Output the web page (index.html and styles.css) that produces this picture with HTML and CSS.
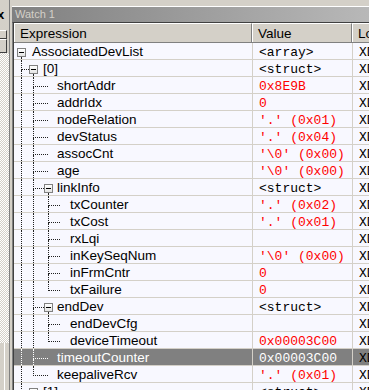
FILE: index.html
```html
<!DOCTYPE html>
<html>
<head>
<meta charset="utf-8">
<link rel="stylesheet" href="styles.css">
</head>
<body>
<div class="side">
  <div class="sb">
    <div class="close">x</div>
    <div class="btn1"></div>
    <div class="btn2"></div>
    <div class="track"></div>
    <div class="thumb"></div>
  </div>
</div>
<div class="watch">
  <div class="title">Watch 1</div>
  <div class="grid">
    <div class="hdr">
      <div class="h1">Expression</div>
      <div class="h2">Value</div>
      <div class="h3">Location</div>
    </div>

    <div class="row">
      <div class="ex"><span class="sp3"></span><span class="node"><span class="nt"></span><span class="bx"></span><span class="stem"></span></span><span class="lbl m6">AssociatedDevList</span></div>
      <div class="val">&lt;array&gt;</div><div class="loc">XDATA</div>
    </div>
    <div class="row">
      <div class="ex"><span class="sp7"></span><span class="tee w8"><span class="th"></span><span class="tb"></span></span><span class="node"><span class="nt"></span><span class="bx"></span><span class="stem"></span></span><span class="lbl m5">[0]</span></div>
      <div class="val">&lt;struct&gt;</div><div class="loc">XDATA</div>
    </div>
    <div class="row">
      <div class="ex"><span class="sp7"></span><span class="v w12"></span><span class="tee w15"><span class="th"></span><span class="tb"></span></span><span class="lbl m9">shortAddr</span></div>
      <div class="val red">0x8E9B</div><div class="loc">XDATA</div>
    </div>
    <div class="row">
      <div class="ex"><span class="sp7"></span><span class="v w12"></span><span class="tee w15"><span class="th"></span><span class="tb"></span></span><span class="lbl m9">addrIdx</span></div>
      <div class="val red">0</div><div class="loc">XDATA</div>
    </div>
    <div class="row">
      <div class="ex"><span class="sp7"></span><span class="v w12"></span><span class="tee w15"><span class="th"></span><span class="tb"></span></span><span class="lbl m9">nodeRelation</span></div>
      <div class="val red">'.' (0x01)</div><div class="loc">XDATA</div>
    </div>
    <div class="row">
      <div class="ex"><span class="sp7"></span><span class="v w12"></span><span class="tee w15"><span class="th"></span><span class="tb"></span></span><span class="lbl m9">devStatus</span></div>
      <div class="val red">'.' (0x04)</div><div class="loc">XDATA</div>
    </div>
    <div class="row">
      <div class="ex"><span class="sp7"></span><span class="v w12"></span><span class="tee w15"><span class="th"></span><span class="tb"></span></span><span class="lbl m9">assocCnt</span></div>
      <div class="val red">'\0' (0x00)</div><div class="loc">XDATA</div>
    </div>
    <div class="row">
      <div class="ex"><span class="sp7"></span><span class="v w12"></span><span class="tee w15"><span class="th"></span><span class="tb"></span></span><span class="lbl m9">age</span></div>
      <div class="val red">'\0' (0x00)</div><div class="loc">XDATA</div>
    </div>
    <div class="row">
      <div class="ex"><span class="sp7"></span><span class="v w12"></span><span class="tee w11"><span class="th"></span><span class="tb"></span></span><span class="node"><span class="nt"></span><span class="bx"></span><span class="stem"></span></span><span class="lbl m4">linkInfo</span></div>
      <div class="val">&lt;struct&gt;</div><div class="loc">XDATA</div>
    </div>
    <div class="row">
      <div class="ex"><span class="sp7"></span><span class="v w12"></span><span class="v w15"></span><span class="tee w12"><span class="th"></span><span class="tb"></span></span><span class="lbl m10">txCounter</span></div>
      <div class="val red">'.' (0x02)</div><div class="loc">XDATA</div>
    </div>
    <div class="row">
      <div class="ex"><span class="sp7"></span><span class="v w12"></span><span class="v w15"></span><span class="tee w12"><span class="th"></span><span class="tb"></span></span><span class="lbl m10">txCost</span></div>
      <div class="val red">'.' (0x01)</div><div class="loc">XDATA</div>
    </div>
    <div class="row">
      <div class="ex"><span class="sp7"></span><span class="v w12"></span><span class="v w15"></span><span class="tee w12"><span class="th"></span><span class="tb"></span></span><span class="lbl m10">rxLqi</span></div>
      <div class="val red"></div><div class="loc">XDATA</div>
    </div>
    <div class="row">
      <div class="ex"><span class="sp7"></span><span class="v w12"></span><span class="v w15"></span><span class="tee w12"><span class="th"></span><span class="tb"></span></span><span class="lbl m10">inKeySeqNum</span></div>
      <div class="val red">'\0' (0x00)</div><div class="loc">XDATA</div>
    </div>
    <div class="row">
      <div class="ex"><span class="sp7"></span><span class="v w12"></span><span class="v w15"></span><span class="tee w12"><span class="th"></span><span class="tb"></span></span><span class="lbl m10">inFrmCntr</span></div>
      <div class="val red">0</div><div class="loc">XDATA</div>
    </div>
    <div class="row">
      <div class="ex"><span class="sp7"></span><span class="v w12"></span><span class="v w15"></span><span class="tee end w12"><span class="th"></span><span class="tb"></span></span><span class="lbl m10">txFailure</span></div>
      <div class="val red">0</div><div class="loc">XDATA</div>
    </div>
    <div class="row">
      <div class="ex"><span class="sp7"></span><span class="v w12"></span><span class="tee w11"><span class="th"></span><span class="tb"></span></span><span class="node"><span class="nt"></span><span class="bx"></span><span class="stem"></span></span><span class="lbl m4">endDev</span></div>
      <div class="val">&lt;struct&gt;</div><div class="loc">XDATA</div>
    </div>
    <div class="row">
      <div class="ex"><span class="sp7"></span><span class="v w12"></span><span class="v w15"></span><span class="tee w12"><span class="th"></span><span class="tb"></span></span><span class="lbl m10">endDevCfg</span></div>
      <div class="val red"></div><div class="loc">XDATA</div>
    </div>
    <div class="row">
      <div class="ex"><span class="sp7"></span><span class="v w12"></span><span class="v w15"></span><span class="tee end w12"><span class="th"></span><span class="tb"></span></span><span class="lbl m10">deviceTimeout</span></div>
      <div class="val red">0x00003C00</div><div class="loc">XDATA</div>
    </div>
    <div class="row sel">
      <div class="ex"><span class="sp7"></span><span class="v w12"></span><span class="tee w15"><span class="th"></span><span class="tb"></span></span><span class="lbl m9">timeoutCounter</span></div>
      <div class="val">0x00003C00</div><div class="loc">XDATA</div>
    </div>
    <div class="row">
      <div class="ex"><span class="sp7"></span><span class="v w12"></span><span class="tee end w15"><span class="th"></span><span class="tb"></span></span><span class="lbl m9">keepaliveRcv</span></div>
      <div class="val red">'.' (0x01)</div><div class="loc">XDATA</div>
    </div>
    <div class="row">
      <div class="ex"><span class="sp7"></span><span class="tee w8"><span class="th"></span><span class="tb"></span></span><span class="node"><span class="nt"></span><span class="bx plus"></span></span><span class="lbl m5">[1]</span></div>
      <div class="val">&lt;struct&gt;</div><div class="loc">XDATA</div>
    </div>
  </div>
</div>
</body>
</html>
```
FILE: styles.css
```css
* { box-sizing: border-box; }
html, body { margin: 0; padding: 0; }
body {
  width: 369px;
  height: 390px;
  overflow: hidden;
  background: #d4d0c8;
  display: flex;
  font-family: "Liberation Sans", Arial, sans-serif;
}

/* left neighbour pane with scrollbar */
.side {
  width: 12px;
  flex: none;
  display: flex;
}
.sb {
  width: 10px;
  display: flex;
  flex-direction: column;
  border-right: 1px solid #808080;
  overflow: hidden;
}
.close {
  height: 30px;
  font-size: 13px;
  font-weight: bold;
  line-height: 13px;
  padding-top: 8px;
  margin-left: -3px;
  color: #000;
}
.btn1 {
  height: 9px;
  width: 7px;
  border-top: 1px solid #fff;
  border-right: 1px solid #404040;
  border-bottom: 1px solid #404040;
}
.btn2 {
  height: 14px;
  width: 7px;
  border-top: 1px solid #fff;
  border-right: 1px solid #404040;
  border-bottom: 1px solid #404040;
}
.track {
  flex: 1;
  background: repeating-conic-gradient(#ffffff 0 25%, #d4d0c8 0 50%) 0 0 / 2px 2px;
}
.thumb {
  height: 47px;
  background: linear-gradient(to right, #d4d0c8 4px, #fff 4px, #fff 5px, #d4d0c8 5px);
}

/* watch window */
.watch {
  flex: 1;
  display: flex;
  flex-direction: column;
  padding-top: 6px;
  min-width: 0;
}
.title {
  height: 16px;
  border-top: 1px solid #fff;
  background: linear-gradient(to right, #808080, #b8b8b8);
  color: #d4d0c8;
  font-size: 11px;
  line-height: 15px;
  padding-left: 3px;
  white-space: nowrap;
}
.grid {
  flex: 1;
  border-top: 1px solid #404040;
  border-left: 1px solid #808080;
  box-shadow: inset 1px 0 0 #404040;
  padding-left: 1px;
  background: #f8f8ff;
}

.hdr {
  display: grid;
  grid-template-columns: 238px 100px 1fr;
  height: 20px;
  background: #d4d0c8;
  border-bottom: 1px solid #808080;
  font-size: 13.5px;
  line-height: 19px;
  white-space: nowrap;
}
.hdr > div {
  border-top: 1px solid #fff;
  border-left: 1px solid #fff;
  border-right: 1px solid #808080;
  padding-left: 5px;
  overflow: hidden;
}
.hdr .h3 { border-right: none; }

.row {
  display: grid;
  grid-template-columns: 239px 100px 1fr;
  height: 17px;
  border-bottom: 1px solid #d4d0c8;
  white-space: nowrap;
}
.ex {
  display: flex;
  border-right: 1px solid #d4d0c8;
  overflow: hidden;
  color: #000;
}
.lbl {
  font-size: 13.5px;
  line-height: 14px;
  padding-top: 2px;
}
.val {
  border-right: 1px solid #d4d0c8;
  font-family: "Liberation Mono", "Courier New", monospace;
  font-size: 13px;
  line-height: 13px;
  padding: 3px 0 0 6px;
  overflow: hidden;
  color: #000;
}
.val.red { color: #ff0000; }
.loc {
  font-family: "Liberation Mono", "Courier New", monospace;
  font-size: 13px;
  line-height: 13px;
  padding: 3px 0 0 6px;
  overflow: hidden;
  color: #000;
}

.sel { background: #808080; }
.sel .ex, .sel .val { color: #fff; }

/* tree guides */
.sp3 { width: 3px; flex: none; }
.sp7 { width: 7px; flex: none; }
.w8 { width: 8px; }
.w11 { width: 11px; }
.w12 { width: 12px; }
.w15 { width: 15px; }
.m4 { margin-left: 4px; }
.m5 { margin-left: 5px; }
.m6 { margin-left: 6px; }
.m9 { margin-left: 9px; }
.m10 { margin-left: 10px; }

.v {
  flex: none;
  border-left: 1px dotted #202020;
}
.tee {
  flex: none;
  display: flex;
  flex-direction: column;
}
.th {
  height: 10px;
  border-left: 1px dotted #202020;
  border-bottom: 1px dotted #202020;
}
.tb {
  flex: 1;
  border-left: 1px dotted #202020;
}
.tee.end .tb { border-left: none; }
.sel .v, .sel .th, .sel .tb { border-color: #fff; }

.node {
  flex: none;
  width: 9px;
  display: flex;
  flex-direction: column;
}
.nt { height: 5px; }
.bx {
  height: 9px;
  border: 1px solid #808080;
  background: linear-gradient(#ffffff, #e4e4e4);
  display: flex;
  align-items: center;
  justify-content: center;
}
.bx::before {
  content: "";
  width: 5px;
  height: 1px;
  background: #000;
}
.stem {
  flex: 1;
  margin-left: 4px;
  border-left: 1px dotted #202020;
}
```
